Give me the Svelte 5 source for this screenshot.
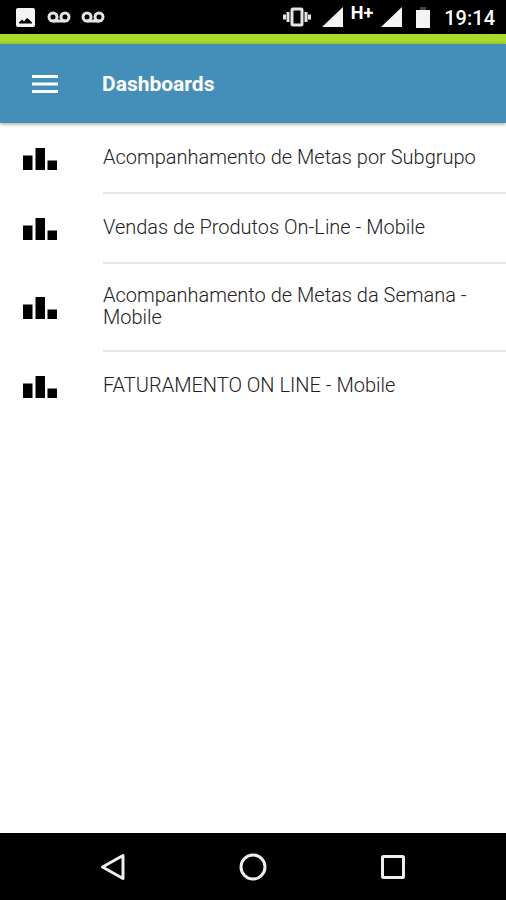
<script lang="ts">
    type Dashboard = {
        id: number,
        name: string,
    };

    const dashboards: Dashboard[] = [
        { id: 1, name: 'Acompanhamento de Metas por Subgrupo' },
        { id: 2, name: 'Vendas de Produtos On-Line - Mobile' },
        { id: 3, name: 'Acompanhamento de Metas da Semana - Mobile' },
        { id: 4, name: 'FATURAMENTO ON LINE - Mobile' },
    ];
</script>

{#snippet voicemail()}
    <svg class="voicemail" width="24" height="12" viewBox="0 0 24 12" aria-hidden="true">
        <circle cx="6" cy="6" r="4" />
        <circle cx="18" cy="6" r="4" />
        <path d="M6 10H18" />
    </svg>
{/snippet}

{#snippet signal()}
    <svg width="21" height="20" viewBox="0 0 21 20" aria-hidden="true">
        <path d="M21 0V20H0Z" />
    </svg>
{/snippet}

<div class="screen">
    <div class="status">
        <div class="notifications">
            <svg width="19" height="19" viewBox="0 0 19 19" aria-hidden="true">
                <rect width="19" height="19" rx="2" />
                <path class="hill" d="M3 15.500V14.500L6 11.500L8 13.500L11 10L13 11.500L16 14.500V15.500Z" />
            </svg>
            {@render voicemail()}
            {@render voicemail()}
        </div>
        <div class="system">
            <svg class="vibrate" width="28" height="20" viewBox="0 0 28 20" aria-hidden="true">
                <rect x="9" y="2" width="10" height="16" rx="1" />
                <path d="M5 5V15M23 5V15M1.500 7.500V12.500M26.500 7.500V12.500" />
            </svg>
            {@render signal()}
            <span class="network">H+</span>
            {@render signal()}
            <svg class="battery" width="14" height="21" viewBox="0 0 14 21" aria-hidden="true">
                <rect class="cap" x="4" width="6" height="3" />
                <rect y="3" width="14" height="18" />
            </svg>
            <time>19:14</time>
        </div>
    </div>

    <header>
        <button class="menu" aria-label="Menu">
            <svg width="26" height="18" viewBox="0 0 26 18" aria-hidden="true">
                <path d="M0 0H26V3H0ZM0 7.500H26V10.500H0ZM0 15H26V18H0Z" />
            </svg>
        </button>
        <h1>Dashboards</h1>
    </header>

    <main>
        <ul>
            {#each dashboards as dashboard (dashboard.id)}
                <li>
                    <a href="#dashboard-{dashboard.id}">
                        <svg width="34" height="22" viewBox="0 0 34 22" aria-hidden="true">
                            <path d="M0 7.500H9.500V22H0ZM12.500 0H22V22H12.500ZM24.500 12.500H34V22H24.500Z" />
                        </svg>
                        <span class="name">{dashboard.name}</span>
                    </a>
                </li>
            {/each}
        </ul>
    </main>

    <nav>
        <button aria-label="Back">
            <svg width="28" height="28" viewBox="0 0 28 28" aria-hidden="true">
                <path d="M24 2.500V25.500L3.500 14Z" />
            </svg>
        </button>
        <button aria-label="Home">
            <svg width="28" height="28" viewBox="0 0 28 28" aria-hidden="true">
                <circle cx="14" cy="14" r="12" />
            </svg>
        </button>
        <button aria-label="Recent apps">
            <svg width="28" height="28" viewBox="0 0 28 28" aria-hidden="true">
                <rect x="3.500" y="3.500" width="21" height="21" rx="1" />
            </svg>
        </button>
    </nav>
</div>

<style>
    :global(body) {
        background: #fff;
    }

    .screen {
        display: flex;
        flex-direction: column;
        min-height: 100vh;
        font-family: Roboto, "Liberation Sans", sans-serif;
    }

    svg {
        display: block;
        flex: none;
    }

    button {
        display: flex;
        align-items: center;
        justify-content: center;
        padding: 0;
        border: 0;
        background: none;
        cursor: pointer;
    }

    .status {
        display: flex;
        justify-content: space-between;
        align-items: center;
        height: 34px;
        padding: 0 11px 0 16px;
        border-bottom: 10px solid #a8dc2d;
        background: #000;
        color: #fff;
        fill: #f4f4f4;
    }

    .notifications {
        display: flex;
        align-items: center;
        gap: 12px;
    }

    .notifications .voicemail + .voicemail {
        margin-left: -2px;
    }

    .hill {
        fill: #000;
    }

    .voicemail,
    .vibrate {
        fill: none;
        stroke: #e4e4e4;
        stroke-width: 3;
    }

    .system {
        display: flex;
        align-items: center;
        gap: 8px;
        height: 100%;
    }

    .vibrate {
        margin-right: 3px;
    }

    .network {
        align-self: flex-start;
        padding-top: 4px;
        font-size: 18px;
        font-weight: 700;
        line-height: 18px;
    }

    .battery {
        margin: 0 6px;
    }

    .cap {
        fill: #444;
    }

    time {
        font-size: 20px;
        font-weight: 500;
        line-height: 22px;
        padding-top: 2px;
    }

    header {
        display: flex;
        align-items: center;
        height: 79px;
        background: #448eba;
        color: #fff;
        box-shadow: 0 1px 4px rgba(0, 0, 0, 0.4);
    }

    .menu {
        width: 90px;
        height: 100%;
        margin-right: 12px;
        fill: #fff;
    }

    h1 {
        margin: 0;
        font-size: 21px;
        font-weight: 700;
        line-height: 24px;
    }

    main {
        flex: 1;
        padding-top: 1px;
    }

    ul {
        margin: 0;
        padding: 0;
        list-style: none;
    }

    a {
        display: flex;
        align-items: center;
        gap: 46px;
        padding-left: 23px;
        color: #222;
        text-decoration: none;
    }

    a svg {
        fill: #000;
    }

    .name {
        display: flex;
        align-items: center;
        flex: 1;
        box-sizing: border-box;
        min-height: 70px;
        padding: 20px 16px 22px 0;
        border-bottom: 2px solid #e6e6e6;
        font-size: 20px;
        font-weight: 300;
        line-height: 22px;
    }

    li:last-child .name {
        border-bottom-color: transparent;
    }

    nav {
        display: grid;
        grid-template-columns: repeat(3, 1fr);
        height: 67px;
        padding: 0 43px;
        background: #000;
    }

    nav svg {
        fill: none;
        stroke: #eee;
        stroke-width: 3;
        stroke-linejoin: round;
    }
</style>
